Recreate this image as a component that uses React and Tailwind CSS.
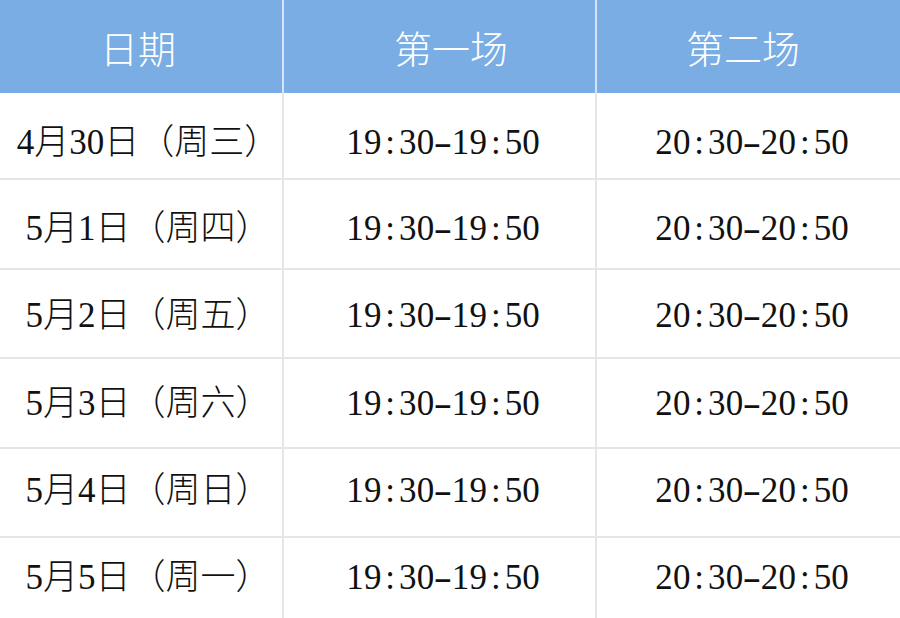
import React from "react";

const dates = [
  ["4月30日（周三）", "pt-[13px]"],
  ["5月1日（周四）", "pt-[8px]"],
  ["5月2日（周五）", "pt-[4px]"],
  ["5月3日（周六）", ""],
  ["5月4日（周日）", "pb-[5px]"],
  ["5月5日（周一）", "pb-[10px]"],
];

const rowH = ["h-[87px]", "h-[90px]", "h-[89px]", "h-[90px]", "h-[89px]", "h-[90px]"];

function Mono({ text }) {
  return (
    <span className="inline-flex">
      {text.split("").map((c, i) => (
        <span key={i} className="inline-block w-[17.6px] text-center">
          {c === "-" ? <span className="inline-block scale-x-[1.6]">-</span> : c}
        </span>
      ))}
    </span>
  );
}

export default function App() {
  const serif = "font-['Liberation_Serif','Noto_Sans_CJK_SC',serif]";
  return (
    <div className="w-[900px] h-[618px] overflow-hidden bg-white">
      <div className="flex h-[93px] bg-[#79ade3] text-white font-['Noto_Sans_CJK_SC',sans-serif] font-light text-[38px] leading-none">
        <div className="w-[284px] border-r-2 border-[#d4e4f5] flex items-center justify-center pr-[6px]">日期</div>
        <div className="w-[313px] border-r-2 border-[#d4e4f5] flex items-center justify-center pl-[23px]">第一场</div>
        <div className="flex-1 flex items-center justify-center pr-[11px]">第二场</div>
      </div>
      {dates.map(([d, pad], i) => (
        <div key={i} className={`flex ${rowH[i]} border-b-2 border-[#e6e6e6] text-[35px] leading-none text-[#111] ${serif}`}>
          <div className={`w-[284px] border-r-2 border-[#e6e6e6] flex items-center justify-center pl-[14px] font-light ${pad}`}>{d}</div>
          <div className={`w-[313px] border-r-2 border-[#e6e6e6] flex items-center justify-center pl-[7px] ${pad}`}>
            <Mono text="19:30-19:50" />
          </div>
          <div className={`flex-1 flex items-center justify-center pl-[7px] ${pad}`}>
            <Mono text="20:30-20:50" />
          </div>
        </div>
      ))}
    </div>
  );
}
